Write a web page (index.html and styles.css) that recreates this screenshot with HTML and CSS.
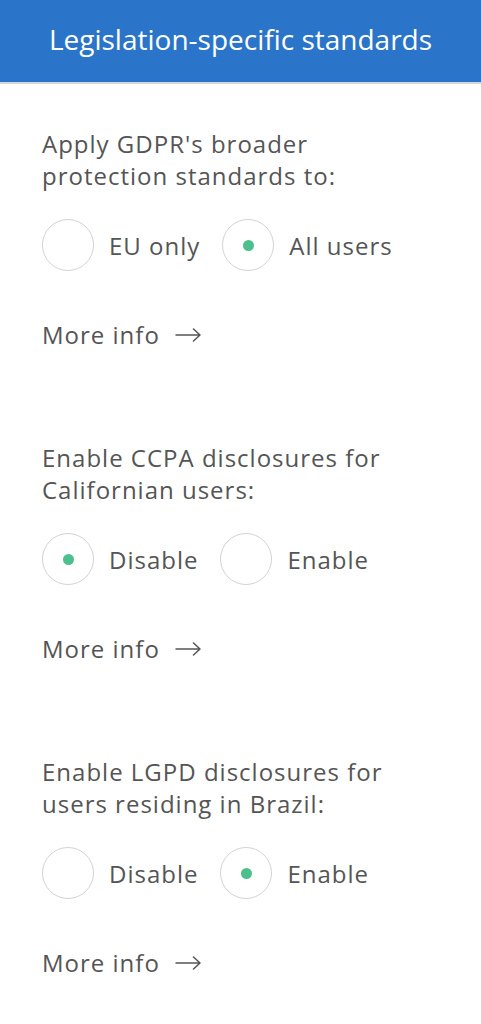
FILE: index.html
```html
<!DOCTYPE html>
<html lang="en">
<head>
<meta charset="utf-8">
<title>Legislation-specific standards</title>
<link rel="stylesheet" href="styles.css">
</head>
<body>
<header class="topbar">
  <h1 class="topbar-title">Legislation-specific standards</h1>
</header>
<main class="content">
  <section class="setting">
    <p class="setting-title">Apply GDPR's broader protection standards to:</p>
    <div class="options">
      <label class="option"><span class="radio"></span><span class="option-label">EU only</span></label>
      <label class="option"><span class="radio radio-on"></span><span class="option-label">All users</span></label>
    </div>
    <a class="more" href="#">More info <svg class="arrow" width="27" height="14" viewBox="0 0 27 14"><path d="M1 7H25M18.5 1L25 7L18.5 13" fill="none" stroke="#555" stroke-width="1.5" stroke-linecap="round" stroke-linejoin="round"/></svg></a>
  </section>
  <section class="setting">
    <p class="setting-title">Enable CCPA disclosures for Californian users:</p>
    <div class="options">
      <label class="option"><span class="radio radio-on"></span><span class="option-label">Disable</span></label>
      <label class="option"><span class="radio"></span><span class="option-label">Enable</span></label>
    </div>
    <a class="more" href="#">More info <svg class="arrow" width="27" height="14" viewBox="0 0 27 14"><path d="M1 7H25M18.5 1L25 7L18.5 13" fill="none" stroke="#555" stroke-width="1.5" stroke-linecap="round" stroke-linejoin="round"/></svg></a>
  </section>
  <section class="setting">
    <p class="setting-title">Enable LGPD disclosures for users residing in Brazil:</p>
    <div class="options">
      <label class="option"><span class="radio"></span><span class="option-label">Disable</span></label>
      <label class="option"><span class="radio radio-on"></span><span class="option-label">Enable</span></label>
    </div>
    <a class="more" href="#">More info <svg class="arrow" width="27" height="14" viewBox="0 0 27 14"><path d="M1 7H25M18.5 1L25 7L18.5 13" fill="none" stroke="#555" stroke-width="1.5" stroke-linecap="round" stroke-linejoin="round"/></svg></a>
  </section>
</main>
</body>
</html>
```
FILE: styles.css
```css
html, body {
  margin: 0;
  padding: 0;
  background: #ffffff;
}
body {
  font-family: "Open Sans", "Liberation Sans", sans-serif;
  color: #555555;
  letter-spacing: 1px;
}
.topbar {
  height: 84px;
  box-sizing: border-box;
  padding-bottom: 4px;
  background: #2a74c9;
  border-bottom: 2px solid #d3d7dc;
  display: flex;
  align-items: center;
  justify-content: center;
}
.topbar-title {
  margin: 0;
  color: #ffffff;
  font-weight: 400;
  font-size: 28px;
  line-height: 32px;
  letter-spacing: 0;
}
.content {
  padding: 44px 42px 0;
}
.setting {
  margin-bottom: 91px;
}
.setting-title {
  margin: 0;
  font-size: 24px;
  line-height: 32px;
  max-width: 370px;
}
.options {
  display: flex;
  gap: 22px;
  margin-top: 27px;
}
.option {
  display: flex;
  align-items: center;
  gap: 15px;
  font-size: 24px;
}
.radio {
  width: 50px;
  height: 50px;
  border: 1.5px solid #d0d4d9;
  border-radius: 50%;
  display: flex;
  align-items: center;
  justify-content: center;
}
.radio-on::after {
  content: "";
  width: 11px;
  height: 11px;
  border-radius: 50%;
  background: #4cbf8c;
}
.more {
  display: inline-flex;
  align-items: center;
  gap: 15px;
  margin-top: 48px;
  font-size: 24px;
  line-height: 32px;
  color: #555555;
  text-decoration: none;
}
```
